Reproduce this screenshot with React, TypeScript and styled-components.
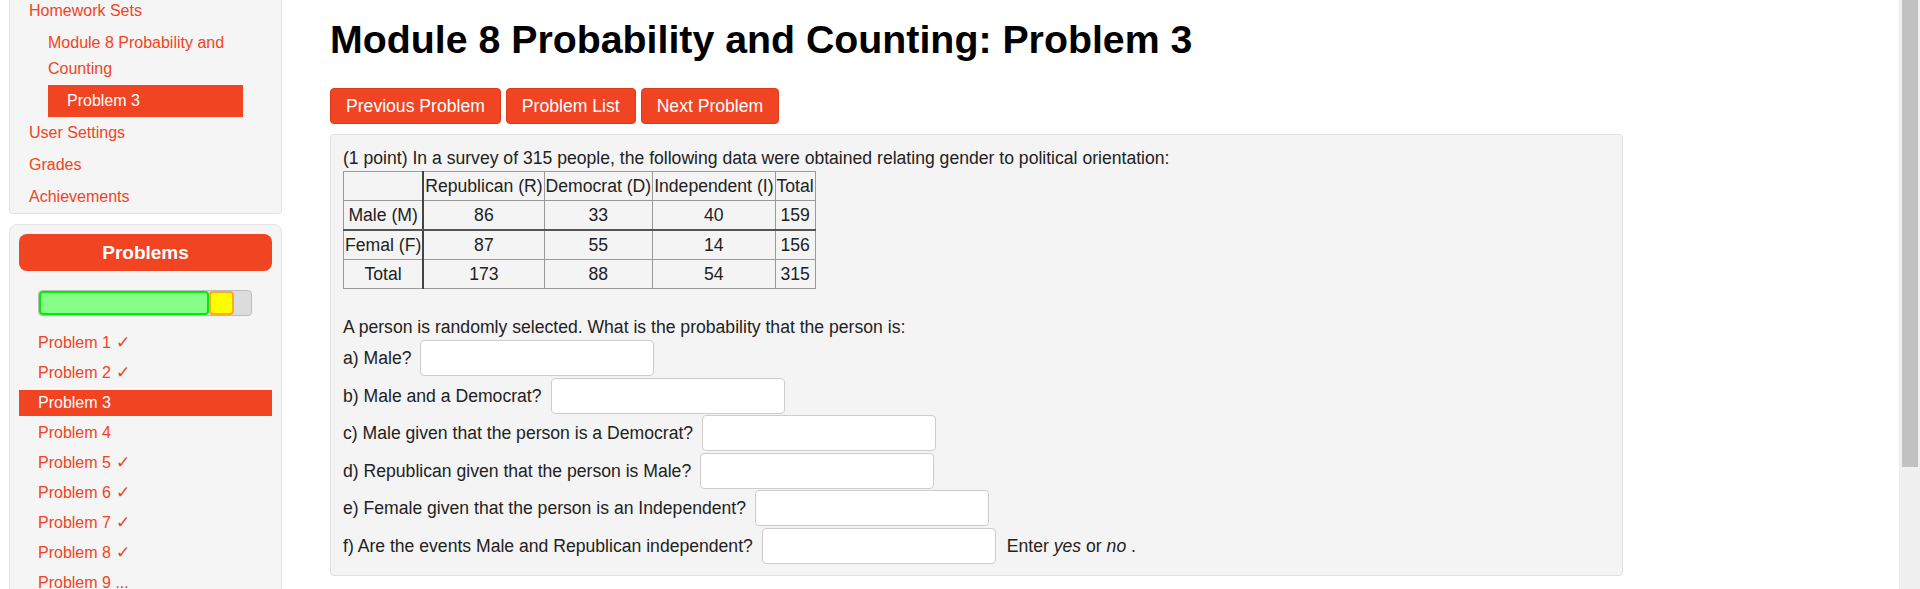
import React, { useLayoutEffect, useRef } from "react";
import styled, { createGlobalStyle } from "styled-components";

const RED = "#f04423";

const GlobalStyle = createGlobalStyle`
  html, body {
    margin: 0;
    padding: 0;
    overflow: hidden;
  }
  body {
    font-family: "Liberation Sans", Arial, sans-serif;
    background: #fff;
    color: #212529;
  }
`;

type Status = "correct" | "partial" | "open";

const problems: { n: number; status: Status }[] = Array.from(
  { length: 25 },
  (_, i) => {
    const n = i + 1;
    let status: Status = "correct";
    if (n === 3 || n === 4 || n === 9) status = "partial";
    if (n === 17 || n === 22) status = "open";
    return { n, status };
  }
);

const navItems = ["User Settings", "Grades", "Achievements"];

const questions = [
  "a) Male?",
  "b) Male and a Democrat?",
  "c) Male given that the person is a Democrat?",
  "d) Republican given that the person is Male?",
  "e) Female given that the person is an Independent?",
  "f) Are the events Male and Republican independent?",
];

// visible height / full document height of the page
const THUMB_RATIO = 589 / 743;

const App = () => {
  const sideRef = useRef<HTMLElement>(null);

  useLayoutEffect(() => {
    if (sideRef.current) sideRef.current.scrollTop = 52;
  }, []);

  const total = problems.length;
  const correct = problems.filter((p) => p.status === "correct").length;
  const partial = 3;

  return (
    <>
      <GlobalStyle />
      <Frame>
        <Page>
          <Sidebar ref={sideRef}>
            <NavPanel>
              <NavList>
                <li>
                  <NavLink $indent={19}>Courses</NavLink>
                </li>
                <li>
                  <NavLink $indent={19}>Homework Sets</NavLink>
                  <NavList $nested>
                    <li>
                      <NavLink $indent={0}>
                        Module 8 Probability and Counting
                      </NavLink>
                      <NavList>
                        <li>
                          <NavLink $indent={19} $active>
                            Problem 3
                          </NavLink>
                        </li>
                      </NavList>
                    </li>
                  </NavList>
                </li>
                {navItems.map((t) => (
                  <li key={t}>
                    <NavLink $indent={19}>{t}</NavLink>
                  </li>
                ))}
              </NavList>
            </NavPanel>

            <ProblemsPanel>
              <ProblemsHeader>Problems</ProblemsHeader>
              <Progress>
                <Segment
                  $kind="correct"
                  style={{ width: `${(correct / total) * 100}%` }}
                />
                <Segment
                  $kind="partial"
                  style={{ width: `${(partial / total) * 100}%` }}
                />
              </Progress>
              <ProblemList>
                {problems.map((p) => (
                  <ProblemItem key={p.n} $active={p.n === 3}>
                    Problem {p.n}
                    {p.n === 9 ? (
                      " ..."
                    ) : p.status === "correct" ? (
                      <Check> {"\u2713"}</Check>
                    ) : null}
                  </ProblemItem>
                ))}
              </ProblemList>
            </ProblemsPanel>
          </Sidebar>

          <Main>
            <Title>Module 8 Probability and Counting: Problem 3</Title>
            <ButtonRow>
              <NavButton>Previous Problem</NavButton>
              <NavButton>Problem List</NavButton>
              <NavButton>Next Problem</NavButton>
            </ButtonRow>

            <ProblemBody>
              <Text>
                (1 point) In a survey of 315 people, the following data were
                obtained relating gender to political orientation:
              </Text>
              <DataTable>
                <tbody>
                  <tr>
                    <Cell $head />
                    <Cell>Republican (R)</Cell>
                    <Cell>Democrat (D)</Cell>
                    <Cell>Independent (I)</Cell>
                    <Cell>Total</Cell>
                  </tr>
                  <tr>
                    <Cell $head $split>
                      Male (M)
                    </Cell>
                    <Cell $split>86</Cell>
                    <Cell $split>33</Cell>
                    <Cell $split>40</Cell>
                    <Cell $split>159</Cell>
                  </tr>
                  <tr>
                    <Cell $head>Femal (F)</Cell>
                    <Cell>87</Cell>
                    <Cell>55</Cell>
                    <Cell>14</Cell>
                    <Cell>156</Cell>
                  </tr>
                  <tr>
                    <Cell $head>Total</Cell>
                    <Cell>173</Cell>
                    <Cell>88</Cell>
                    <Cell>54</Cell>
                    <Cell>315</Cell>
                  </tr>
                </tbody>
              </DataTable>

              <Text>
                A person is randomly selected. What is the probability that
                the person is:
              </Text>
              <Answers>
                {questions.map((q, i) => (
                  <AnswerRow key={q}>
                    <span>{q}</span>
                    <AnswerInput type="text" aria-label={q} />
                    {i === questions.length - 1 && (
                      <Hint>
                        Enter <em>yes</em> or <em>no</em> .
                      </Hint>
                    )}
                  </AnswerRow>
                ))}
              </Answers>
            </ProblemBody>

            <ButtonRow $top>
              <NavButton>Preview My Answers</NavButton>
              <NavButton>Submit Answers</NavButton>
            </ButtonRow>
            <Footer>You have attempted this problem 0 times.</Footer>
          </Main>
        </Page>

        <ScrollTrack>
          <ScrollThumb style={{ height: `${THUMB_RATIO * 100}%` }} />
        </ScrollTrack>
      </Frame>
    </>
  );
};

export default App;

const Frame = styled.div`
  display: flex;
  height: 100vh;
  overflow: hidden;
`;

const Page = styled.div`
  flex: 1;
  min-width: 0;
  display: flex;
  align-items: flex-start;
  height: 100%;
  overflow: hidden;
`;

const ScrollTrack = styled.div`
  flex: 0 0 21px;
  box-sizing: border-box;
  height: 100%;
  padding: 0 2px 0 2px;
  background: #f0f0f0;
  border-left: 1px solid #ebebeb;
`;

const ScrollThumb = styled.div`
  background: #c1c1c1;
`;

const Sidebar = styled.aside`
  flex: 0 0 291px;
  height: 100%;
  box-sizing: border-box;
  padding: 10px 9px;
  overflow-y: auto;
  scrollbar-width: none;
`;

const NavPanel = styled.nav`
  background: #f5f5f5;
  border: 1px solid #e3e3e3;
  border-radius: 4px;
  padding: 4px 0 0;
`;

const NavList = styled.ul<{ $nested?: boolean }>`
  list-style: none;
  margin: ${(p) => (p.$nested ? "0 38px" : "0")};
  padding: 0;
`;

const NavLink = styled.a<{ $indent: number; $active?: boolean }>`
  display: block;
  padding: 3px 0 3px ${(p) => p.$indent}px;
  font-size: 16px;
  line-height: 26px;
  color: ${(p) => (p.$active ? "#fff" : RED)};
  background: ${(p) => (p.$active ? RED : "transparent")};
  text-decoration: none;
  cursor: pointer;
`;

const ProblemsPanel = styled.section`
  margin-top: 10px;
  background: #f5f5f5;
  border: 1px solid #e3e3e3;
  border-radius: 8px;
  padding: 9px;
`;

const ProblemsHeader = styled.div`
  display: flex;
  align-items: center;
  justify-content: center;
  height: 37px;
  border-radius: 8px;
  background: ${RED};
  color: #fff;
  font-size: 19px;
  font-weight: 700;
`;

const Progress = styled.div`
  display: flex;
  height: 26px;
  box-sizing: border-box;
  margin: 19px 20px 14px 19px;
  border: 1px solid #bcbcbc;
  border-radius: 4px;
  background: #dcdcdc;
  overflow: hidden;
`;

const Segment = styled.div<{ $kind: "correct" | "partial" }>`
  box-sizing: border-box;
  height: 100%;
  border-radius: 4px;
  border: 2px solid ${(p) => (p.$kind === "correct" ? "#00ee00" : "#ffaa22")};
  background: ${(p) => (p.$kind === "correct" ? "#88ff88" : "#ffff00")};
`;

const ProblemList = styled.div`
  display: flex;
  flex-direction: column;
  gap: 4px;
`;

const ProblemItem = styled.a<{ $active?: boolean }>`
  display: block;
  height: 26px;
  padding: 0 19px;
  font-size: 16px;
  line-height: 26px;
  color: ${(p) => (p.$active ? "#fff" : RED)};
  background: ${(p) => (p.$active ? RED : "transparent")};
  cursor: pointer;
`;

const Check = styled.span`
  font-family: "DejaVu Sans", sans-serif;
  font-size: 17px;
  font-weight: 200;
  line-height: 0;
`;

const Main = styled.main`
  flex: 1;
  min-width: 0;
  padding: 16px 40px 8px 39px;
`;

const Title = styled.h1`
  margin: 0 0 25px;
  font-size: 39.3px;
  line-height: 47px;
  font-weight: 700;
  color: #000;
`;

const ButtonRow = styled.div<{ $top?: boolean }>`
  display: flex;
  gap: 5px;
  margin: ${(p) => (p.$top ? "16px 0 0" : "0 0 10px")};
`;

const NavButton = styled.button`
  height: 36px;
  padding: 0 15px;
  background: ${RED};
  border: 1px solid #dc3a1a;
  border-radius: 4px;
  color: #fff;
  font-family: inherit;
  font-size: 17.6px;
  cursor: pointer;
`;

const ProblemBody = styled.div`
  max-width: 1293px;
  box-sizing: border-box;
  background: #f4f4f4;
  border: 1px solid #e0e0e0;
  border-radius: 4px;
  padding: 10px 12px 11px;
  font-size: 17.6px;
  line-height: 26px;
  color: #222;
`;

const Text = styled.p`
  margin: 0;
`;

const DataTable = styled.table`
  border-collapse: collapse;
  border: 1px solid #888;
  margin-bottom: 25px;
`;

const Cell = styled.td<{ $head?: boolean; $split?: boolean }>`
  border: 1px solid #999;
  border-right: ${(p) => (p.$head ? "2px solid #444" : "1px solid #999")};
  border-bottom: ${(p) => (p.$split ? "2px solid #555" : "1px solid #999")};
  padding: 1px 1px;
  line-height: 26px;
  text-align: center;
  white-space: nowrap;
`;

const Answers = styled.div`
  display: flex;
  flex-direction: column;
  gap: 1.6px;
`;

const AnswerRow = styled.div`
  display: flex;
  align-items: center;
  gap: 9px;
  height: 36px;
`;

const AnswerInput = styled.input`
  width: 234px;
  height: 36px;
  box-sizing: border-box;
  border: 1px solid #cdcdcd;
  border-radius: 4px;
  background: #fff;
  font-family: inherit;
  font-size: 17.6px;
  padding: 0 8px;
`;

const Hint = styled.span`
  margin-left: 2px;
`;

const Footer = styled.p`
  margin: 50px 0 0;
  padding: 16px 0;
  line-height: 26px;
  font-size: 16px;
  color: #555;
`;
